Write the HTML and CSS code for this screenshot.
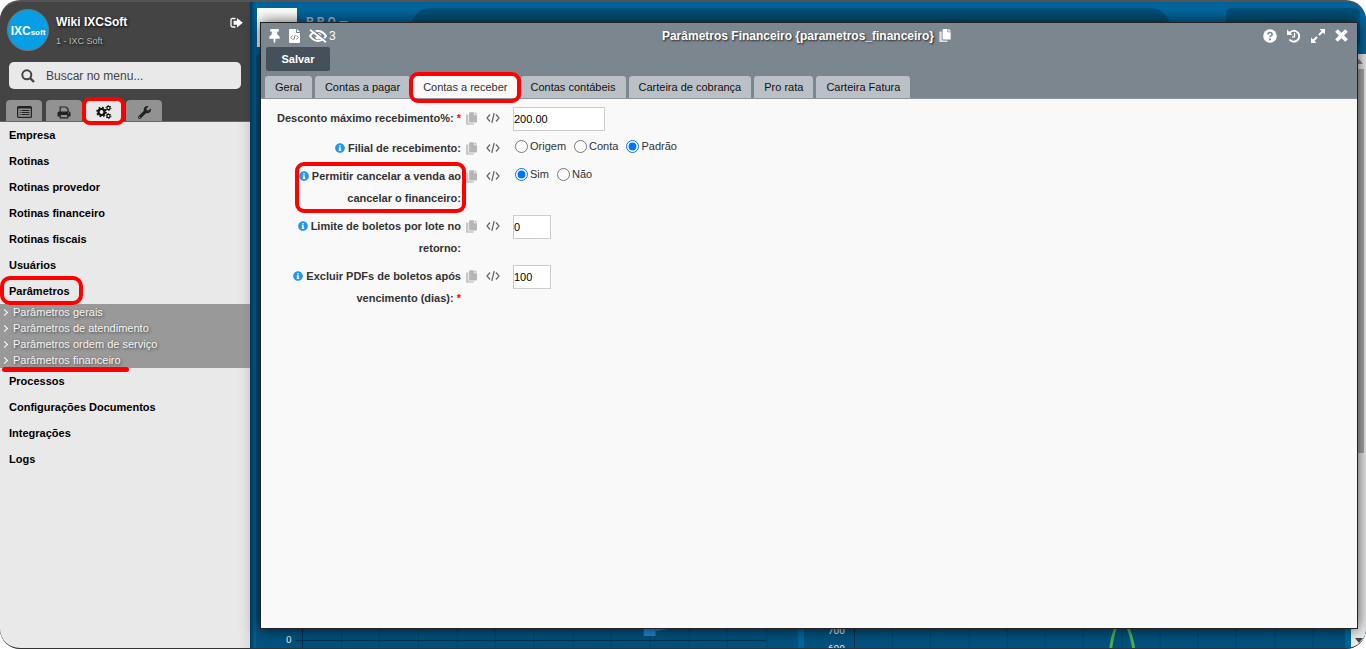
FILE: index.html
```html
<!DOCTYPE html>
<html lang="pt-BR">
<head>
<meta charset="utf-8">
<title>Parâmetros Financeiro</title>
<link rel="stylesheet" href="styles.css">
</head>
<body>
<svg class="sprite" aria-hidden="true">
  <symbol id="copy" viewBox="0 0 448 512"><path d="M320 448v40c0 13.255-10.745 24-24 24H24c-13.255 0-24-10.745-24-24V120c0-13.255 10.745-24 24-24h72v296c0 30.879 25.121 56 56 56h168z" opacity=".75"/><path d="M320 104V0H152c-13.255 0-24 10.745-24 24v368c0 13.255 10.745 24 24 24h272c13.255 0 24-10.745 24-24V128H344c-13.200 0-24-10.800-24-24zm120.971-31.029L375.029 7.029A24 24 0 0 0 358.059 0H352v96h96v-6.059a24 24 0 0 0-7.029-16.970z"/></symbol>
  <symbol id="pin" viewBox="0 0 384 512"><path d="M298.028 214.267L285.793 96H328c13.255 0 24-10.745 24-24V24c0-13.255-10.745-24-24-24H56C42.745 0 32 10.745 32 24v48c0 13.255 10.745 24 24 24h42.207L85.972 214.267C37.465 236.820 0 277.261 0 328c0 13.255 10.745 24 24 24h136v104.007c0 1.242.289 2.467.845 3.578l24 48c2.941 5.882 11.364 5.893 14.311 0l24-48a8.008 8.008 0 0 0 .845-3.578V352h136c13.255 0 24-10.745 24-24-.001-51.183-37.983-91.420-85.973-113.733z"/></symbol>
  <symbol id="info" viewBox="0 0 512 512"><path d="M256 8C119.043 8 8 119.083 8 256c0 136.997 111.043 248 248 248s248-111.003 248-248C504 119.083 392.957 8 256 8zm0 90c26 0 46 20 46 46s-20 46-46 46-46-20-46-46 20-46 46-46zm66 294c0 7-5 12-12 12H202c-7 0-12-5-12-12v-32c0-7 5-12 12-12h12v-72h-12c-7 0-12-5-12-12v-32c0-7 5-12 12-12h84c7 0 12 5 12 12v116h12c7 0 12 5 12 12v32z"/></symbol>
  <symbol id="code" viewBox="0 0 14 12"><path d="M4 2.500L1 6l3 3.500M10 2.500L13 6l-3 3.500M8.200 1L5.800 11" fill="none" stroke="currentColor" stroke-width="1.200"/></symbol>
</svg>
<div class="screen">
  <aside class="sidebar">
    <header class="account">
      <div class="logo"><b>IXC</b><small>soft</small></div>
      <div class="who"><strong>Wiki IXCSoft</strong><span>1 - IXC Soft</span></div>
      <button class="icon-button logout" aria-label="Sair"><svg width="13" height="12" viewBox="0 0 13 12"><path d="M5.500 1.500H2.500Q1 1.500 1 3v5.500Q1 10 2.500 10h3" fill="none" stroke="currentColor" stroke-width="1.300"/><path d="M3.500 3.800H7V1l5.800 4.800L7 10.500V7.800H3.500z"/></svg></button>
    </header>
    <label class="search">
      <svg width="14" height="14" viewBox="0 0 14 14"><circle cx="5.800" cy="5.800" r="4.500" fill="none" stroke="currentColor" stroke-width="2"/><path d="M9 9l4 4" stroke="currentColor" stroke-width="2.400"/></svg>
      <input type="text" placeholder="Buscar no menu..." aria-label="Buscar no menu">
    </label>
    <nav class="side-tabs">
      <button aria-label="Menu"><svg width="15" height="12" viewBox="0 0 15 12"><rect x=".6" y=".6" width="13.800" height="10.800" rx="1" fill="none" stroke="currentColor" stroke-width="1.200"/><path d="M1 1h13v1.500H1z"/><path d="M2.500 4.500h1M4.500 4.500h8M2.500 6.500h1M4.500 6.500h8M2.500 8.500h1M4.500 8.500h8" stroke="currentColor"/></svg></button>
      <button aria-label="Relatórios"><svg width="14" height="13" viewBox="0 0 14 13"><path d="M3.200 6V1h5.800l2 2v3" fill="none" stroke="currentColor" stroke-width="1.200"/><path fill-rule="evenodd" d="M2 5.500h10q1.500 0 1.500 1.500v3.500H11V9H3v1.500H.5V7Q.5 5.500 2 5.500zM11 6.500v1h1v-1z"/><path d="M3.200 9v2.900h7.600V9" fill="none" stroke="currentColor" stroke-width="1.200"/></svg></button>
      <button class="active marked" aria-label="Configurações"><svg width="16" height="14" viewBox="0 0 16 14"><g fill="none" stroke="currentColor"><circle cx="5.500" cy="7" r="3" stroke-width="2.200"/><circle cx="5.500" cy="7" r="4.500" stroke-width="1.600" stroke-dasharray="1.800 1.734"/><circle cx="12.500" cy="3" r="1.600" stroke-width="1.200"/><circle cx="12.500" cy="3" r="2.500" stroke-dasharray="1.300 1.318"/><circle cx="12.500" cy="11" r="1.600" stroke-width="1.200"/><circle cx="12.500" cy="11" r="2.500" stroke-dasharray="1.300 1.318"/></g></svg></button>
      <button aria-label="Ferramentas"><svg width="13" height="13" viewBox="0 0 512 512"><path d="M507.700 109.100c-2.200-9-13.500-12.100-20.100-5.500L413.200 178l-67.900-11.300-11.300-67.900 74.400-74.400c6.600-6.600 3.400-17.900-5.700-20.200-47.400-11.700-99.600 1-136.600 38-39.600 39.600-50.500 97.100-34.100 147.200L18.700 402.800c-25 25-25 65.500 0 90.500s65.500 25 90.500 0l213.200-213.200c50.100 16.700 107.500 5.700 147.400-34.200 37.100-37.100 49.700-89.300 37.900-136.800zM64 472a24 24 0 1 1 0-48 24 24 0 0 1 0 48z"/></svg></button>
    </nav>
    <nav class="menu">
      <a href="#">Empresa</a>
      <a href="#">Rotinas</a>
      <a href="#">Rotinas provedor</a>
      <a href="#">Rotinas financeiro</a>
      <a href="#">Rotinas fiscais</a>
      <a href="#">Usuários</a>
      <a href="#"><span class="marked">Parâmetros</span></a>
      <div class="submenu">
        <a href="#"><i class="chevron"></i>Parâmetros gerais</a>
        <a href="#"><i class="chevron"></i>Parâmetros de atendimento</a>
        <a href="#"><i class="chevron"></i>Parâmetros ordem de serviço</a>
        <a href="#" class="underlined"><i class="chevron"></i>Parâmetros financeiro</a>
      </div>
      <a href="#">Processos</a>
      <a href="#">Configurações Documentos</a>
      <a href="#">Integrações</a>
      <a href="#">Logs</a>
    </nav>
  </aside>

  <main class="workspace">
    <div class="dashboard">
      <div class="dash-top">
        <div class="thumb"></div>
        <span class="brand">P R O —</span>
        <div class="pill"></div>
        <div class="corner"></div>
      </div>
      <div class="dash-body">
        <div class="panels">
          <div class="panel">
            <svg viewBox="0 0 542 60">
              <path class="grid" d="M85.500 0v60M123.500 0v60M162.500 0v60M201.500 0v60M239.500 0v60M278.500 0v60M317.500 0v60M355.500 0v60M394.500 0v60M433.500 0v60M471.500 0v60M511.500 0v60"/>
              <path class="axis" d="M46.500 0v60M40 52.500h471"/>
              <path d="M388 30h12v17q0 1-1 1h-10q-1 0-1-1z" fill="#2187dc"/><path d="M400 40l12 1-12 2z" fill="#2187dc"/>
              <text x="30" y="55">0</text>
            </svg>
          </div>
          <div class="panel">
            <svg viewBox="0 0 542 60">
              <path class="grid" d="M88.500 0v60M126.500 0v60M165.500 0v60M203.500 0v60M241.500 0v60M279.500 0v60M318.500 0v60M356.500 0v60M394.500 0v60M432.500 0v60M471.500 0v60M509.500 0v60"/>
              <path class="axis" d="M50.500 0v60"/>
              <path d="M307 60Q311 34 318 34T330 60" fill="none" stroke="#4caf50" stroke-width="3"/>
              <text x="24" y="46">700</text><text x="24" y="64">600</text>
            </svg>
          </div>
        </div>
        <div class="scrollbar"><i class="arrow up"></i><i class="track"><i class="bar"></i></i><i class="arrow"></i></div>
      </div>
    </div>

    <section class="window">
      <header class="window-head">
        <div class="title-row">
          <div class="tools">
            <button class="icon-button" aria-label="Fixar"><svg width="11" height="14"><use href="#pin"/></svg></button>
            <button class="icon-button" aria-label="Código"><svg width="11" height="14" viewBox="0 0 11 14"><path d="M1 0h6v4h4v9q0 1-1 1H1q-1 0-1-1V1q0-1 1-1zM8 0l3 3H8z"/><path d="M3.500 6.500L1.700 8.500l1.800 2M7.500 6.500l1.800 2-1.800 2M6.200 6l-1.400 5" fill="none" stroke="#7c868f"/></svg></button>
            <button class="icon-button" aria-label="Campos ocultos"><svg width="18" height="14" viewBox="0 0 18 14"><path d="M1 7Q4.500 2 9 2t8 5Q13.500 12 9 12T1 7z" fill="none" stroke="currentColor" stroke-width="2"/><path d="M9 4a3.200 3.200 0 1 1-3 4l3-1z"/><path d="M2.500 0l15 12" stroke="#7c868f" stroke-width="1.600"/><path d="M1 .7l16 12.600" stroke="currentColor" stroke-width="1.800"/></svg><span>3</span></button>
          </div>
          <h1>Parâmetros Financeiro {parametros_financeiro}<svg width="12" height="13"><use href="#copy"/></svg></h1>
          <div class="controls">
            <button class="icon-button" aria-label="Ajuda"><svg width="14" height="14" viewBox="0 0 14 14"><circle cx="7" cy="7" r="6.800"/><path d="M4.800 5.400Q5 3.500 7 3.500t2.200 1.700Q9.200 6.300 8 6.900q-1 .5-1 1.400" fill="none" stroke="#7c868f" stroke-width="1.600"/><circle cx="7" cy="10.300" r="1.100" fill="#7c868f"/></svg></button>
            <button class="icon-button" aria-label="Histórico"><svg width="14" height="14" viewBox="0 0 14 14"><path d="M2.500 4a5.400 5.400 0 1 1 0 6.500" fill="none" stroke="currentColor" stroke-width="2"/><path d="M0 .6V6h5.500z"/><path d="M7.500 4v3.800H5" fill="none" stroke="currentColor" stroke-width="1.300"/></svg></button>
            <button class="icon-button" aria-label="Maximizar"><svg width="14" height="14" viewBox="0 0 14 14"><path d="M8.500 0H14v5.500zM0 8.500V14h5.500z"/><path d="M12 2L8 6M6 8l-4 4" stroke="currentColor" stroke-width="2"/></svg></button>
            <button class="icon-button" aria-label="Fechar"><svg width="13" height="13" viewBox="0 0 13 13"><path d="M1.500 1.500l10 10M11.500 1.500l-10 10" stroke="currentColor" stroke-width="3.800"/></svg></button>
          </div>
        </div>
        <button class="save">Salvar</button>
        <nav class="tabs">
          <button>Geral</button>
          <button>Contas a pagar</button>
          <button class="active marked">Contas a receber</button>
          <button>Contas contábeis</button>
          <button>Carteira de cobrança</button>
          <button>Pro rata</button>
          <button>Carteira Fatura</button>
        </nav>
      </header>
      <form class="form">
        <div class="row">
          <label class="caption" for="desconto">Desconto máximo recebimento%: <em>*</em></label>
          <svg class="copy" width="11" height="13"><use href="#copy"/></svg><svg class="code" width="14" height="12"><use href="#code"/></svg>
          <div class="field"><input class="wide" id="desconto" type="text" value="200.00"></div>
        </div>
        <div class="row">
          <span class="caption" id="filial"><svg width="10" height="10"><use href="#info"/></svg> Filial de recebimento:</span>
          <svg class="copy" width="11" height="13"><use href="#copy"/></svg><svg class="code" width="14" height="12"><use href="#code"/></svg>
          <div class="field options" role="radiogroup" aria-labelledby="filial">
            <label><input type="radio" name="filial">Origem</label>
            <label><input type="radio" name="filial">Conta</label>
            <label><input type="radio" name="filial" checked>Padrão</label>
          </div>
        </div>
        <div class="row">
          <span class="caption marked" id="permitir"><svg width="10" height="10"><use href="#info"/></svg> Permitir cancelar a venda ao cancelar o financeiro:</span>
          <svg class="copy" width="11" height="13"><use href="#copy"/></svg><svg class="code" width="14" height="12"><use href="#code"/></svg>
          <div class="field options" role="radiogroup" aria-labelledby="permitir">
            <label><input type="radio" name="permitir" checked>Sim</label>
            <label><input type="radio" name="permitir">Não</label>
          </div>
        </div>
        <div class="row">
          <label class="caption" for="limite"><svg width="10" height="10"><use href="#info"/></svg> Limite de boletos por lote no retorno:</label>
          <svg class="copy" width="11" height="13"><use href="#copy"/></svg><svg class="code" width="14" height="12"><use href="#code"/></svg>
          <div class="field"><input id="limite" type="text" value="0"></div>
        </div>
        <div class="row">
          <label class="caption" for="excluir"><svg width="10" height="10"><use href="#info"/></svg> Excluir PDFs de boletos após vencimento (dias): <em>*</em></label>
          <svg class="copy" width="11" height="13"><use href="#copy"/></svg><svg class="code" width="14" height="12"><use href="#code"/></svg>
          <div class="field"><input id="excluir" type="text" value="100"></div>
        </div>
      </form>
    </section>
  </main>
</div>
</body>
</html>
```
FILE: styles.css
```css
* { box-sizing: border-box; }
body { margin: 0; background: #fff; font: 11px "Liberation Sans", Arial, sans-serif; color: #333; }
button, input { font: inherit; color: inherit; }
button { border: 0; padding: 0; margin: 0; background: none; cursor: pointer; }
a { color: inherit; text-decoration: none; }
svg { fill: currentColor; flex: none; }
.sprite { position: absolute; width: 0; height: 0; }

.screen { display: flex; height: 100vh; overflow: hidden; border-radius: 20px; border-top: 2px solid #555; border-bottom: 1px solid #333; background: #444; }
.icon-button { display: flex; align-items: center; color: #fff; }

/* Red highlight rings */
.marked { position: relative; }
.marked::after { content: ""; position: absolute; border: 4px solid #f00; border-radius: 9px; pointer-events: none; z-index: 2; }

/* Sidebar */
.sidebar { flex: none; width: 250px; display: flex; flex-direction: column; background: #444; }
.account { display: flex; gap: 7px; padding: 7px 7px 0; height: 60px; color: #fff; }
.logo { flex: none; display: flex; align-items: baseline; justify-content: center; width: 42px; height: 42px; border: 1px solid #777; border-radius: 50%; background: #069fe5; line-height: 42px; }
.logo b { font-size: 12px; }
.logo small { font-size: 8px; font-weight: bold; }
.who { flex: 1; display: flex; flex-direction: column; gap: 7px; padding-top: 6px; text-shadow: 1px 1px 3px #000; }
.who strong { font-size: 12px; line-height: 14px; }
.who span { font-size: 9px; line-height: 10px; color: #bbb; }
.logout { height: 28px; }
.search { display: flex; align-items: center; gap: 11px; height: 27px; margin: 0 9px; padding: 0 12px; border-radius: 5px; background: #e9e9e9; color: #444; }
.search input { flex: 1; min-width: 0; border: 0; padding: 0; background: none; outline: 0; font-size: 12px; }
.search input::placeholder { color: #444; opacity: 1; }
.side-tabs { display: flex; gap: 4px; padding: 11px 6px 0; border-bottom: 1px solid #666; }
.side-tabs button { display: flex; align-items: center; justify-content: center; width: 36px; height: 21px; padding-top: 3px; border-radius: 4px 4px 0 0; background: #929292; color: #222; }
.side-tabs .active { background: #e9e9e9; color: #111; }
.side-tabs .marked::after { inset: -3px -3px -4px -4px; border-radius: 8px; }
.menu { flex: 1; background: linear-gradient(to left, #dcdcdc, #e9e9e9 12px); }
.menu a { display: block; padding-left: 9px; line-height: 26px; font-weight: bold; color: #000; }
.menu .marked::after { inset: -9px -13px -8px -9px; border-radius: 10px; }
.submenu { background: #999; }
.submenu a { position: relative; display: flex; align-items: center; gap: 6px; padding-left: 2px; line-height: 16px; font-weight: normal; color: #f5f5f5; text-shadow: 1px 1px 3px #444; }
.chevron { width: 5px; height: 5px; border: solid #fff; border-width: 1px 1px 0 0; transform: rotate(45deg); }
.underlined::after { content: ""; position: absolute; left: 2px; bottom: -4px; width: 127px; height: 5px; border-radius: 3px; background: #f00; z-index: 1; }

/* Dashboard behind the window */
.workspace { position: relative; flex: 1; min-width: 0; }
.dashboard { display: flex; flex-direction: column; height: 100%; background: #00669d; box-shadow: inset 5px 0 5px -3px #00304c; }
.dash-top { display: flex; height: 52px; padding: 6px 6px 7px 7px; }
.thumb { width: 40px; background: #fff; }
.brand { width: 114px; padding: 7px 0 0 9px; font: bold 12px Roboto, sans-serif; color: #9fbdd0; }
.pill { flex: 1; border-radius: 20px; background: #005078; }
.corner { width: 134px; margin-left: 56px; border-radius: 5px; background: #005078; }
.dash-body { flex: 1; display: flex; min-height: 0; }
.panels { flex: 1; display: grid; grid-template-columns: 1fr 1fr; gap: 6px; padding: 0 6px; }
.panel { display: flex; align-items: flex-end; border-radius: 5px 5px 0 0; background: #00527f; }
.panel svg { width: 100%; font: 10px Roboto, sans-serif; fill: #e4eef4; }
.grid, .axis { fill: none; stroke: #00476e; }
.axis { stroke: #00304c; }
.scrollbar { width: 15px; display: flex; flex-direction: column; align-items: center; background: #ececec; }
.arrow { margin: 5px 0; border: 4px solid transparent; border-top: 5px solid #444; border-bottom: 0; }
.arrow.up { border-top-color: #888; transform: rotate(180deg); }
.track { flex: 1; width: 11px; }
.bar { display: block; height: 68%; background: #aaa; }

/* Window */
.window { position: absolute; inset: 20px 8px 19px 10px; display: flex; flex-direction: column; border: 1px solid #222; background: #f9f9f9; box-shadow: 0 0 14px rgba(0, 0, 0, .7); }
.window-head { background: #7c868f; color: #fff; border-bottom: 1px solid #8d969e; }
.title-row { display: grid; grid-template-columns: 1fr auto 1fr; height: 24px; align-items: center; padding: 1px 9px 0 8px; }
.tools, .controls { display: flex; gap: 9px; align-items: center; }
.controls { gap: 10px; justify-content: flex-end; }
.tools span { margin-left: 2px; font-size: 12px; }
h1 { display: flex; align-items: center; gap: 5px; margin: 0 4px 0 0; font-size: 12px; line-height: 14px; text-shadow: 1px 1px 2px #222; }
.save { display: block; width: 64px; height: 24px; margin-left: 5px; border-radius: 2px; background: #46505a; font-weight: bold; }
.tabs { display: flex; gap: 3px; padding: 5px 4px 0; }
.tabs button { height: 22px; padding: 0 10px; border-radius: 3px 3px 0 0; background: #bbc0c7; color: #111; white-space: nowrap; }
.tabs .active { background: #f9f9f9; color: #333; }
.tabs .marked::after { inset: -4px -3px -5px -4px; }

/* Form */
.form { padding-top: 8px; }
.row { display: grid; grid-template-columns: 200px 11px 14px 1fr; align-items: start; padding-bottom: 6px; }
.caption { margin-left: 12px; line-height: 22px; font-weight: bold; text-align: right; color: #333; }
.caption svg { vertical-align: -1px; color: #2196f3; }
.caption em { font-style: normal; color: #f00; }
.caption.marked::after { inset: -3px -5px -4px 22px; }
.copy { margin: 5px 0 0 5px; color: #b5b5b5; }
.code { margin: 5px 0 0 14px; color: #666; }
.field { margin-left: 27px; }
.field input[type="text"] { display: block; width: 38px; height: 24px; padding: 0; border: 1px solid #ccc; background: #fff; color: #000; }
.field input.wide { width: 92px; }
.options { display: flex; gap: 8px; padding-left: 2px; line-height: 18px; }
.options label { display: flex; align-items: center; gap: 2px; }
.options input { width: 13px; height: 13px; margin: 0; }
```
